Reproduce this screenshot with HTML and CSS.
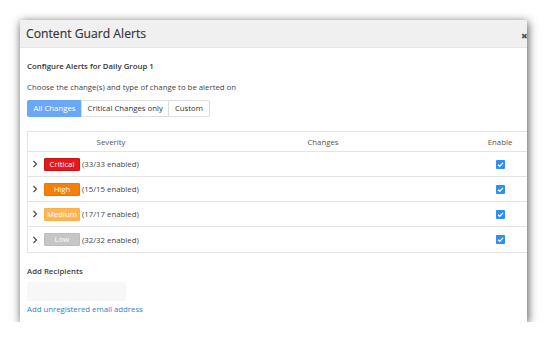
FILE: index.html
```html
<!DOCTYPE html>
<html>
<head>
<meta charset="utf-8">
<link rel="stylesheet" href="styles.css">
</head>
<body>
<div class="stage">
  <div class="dialog">
    <div class="header">
      <span class="title">Content Guard Alerts</span>
      <span class="close">&#x2716;</span>
    </div>
    <div class="content">
      <div class="subtitle">Configure Alerts for Daily Group 1</div>
      <div class="hint">Choose the change(s) and type of change to be alerted on</div>
      <div class="btn-group">
        <span class="btn active">All Changes</span>
        <span class="btn">Critical Changes only</span>
        <span class="btn">Custom</span>
      </div>
      <div class="table">
        <div class="row head">
          <div class="c1">Severity</div>
          <div class="c2">Changes</div>
          <div class="c3">Enable</div>
        </div>
        <div class="row">
          <div class="c1 sev"><svg class="chev" viewBox="0 0 6 8" width="6" height="8"><path d="M1.5 1 L4.5 4 L1.5 7" fill="none" stroke="#444" stroke-width="1.1"/></svg><span class="badge critical">Critical</span><span class="count">(33/33 enabled)</span></div>
          <div class="c2"></div>
          <div class="c3"><span class="check"><svg viewBox="0 0 10 10" width="10" height="10"><path d="M2.3 5.2 L4.2 7 L7.8 3.2" fill="none" stroke="#fff" stroke-width="1.4"/></svg></span></div>
        </div>
        <div class="row">
          <div class="c1 sev"><svg class="chev" viewBox="0 0 6 8" width="6" height="8"><path d="M1.5 1 L4.5 4 L1.5 7" fill="none" stroke="#444" stroke-width="1.1"/></svg><span class="badge high">High</span><span class="count">(15/15 enabled)</span></div>
          <div class="c2"></div>
          <div class="c3"><span class="check"><svg viewBox="0 0 10 10" width="10" height="10"><path d="M2.3 5.2 L4.2 7 L7.8 3.2" fill="none" stroke="#fff" stroke-width="1.4"/></svg></span></div>
        </div>
        <div class="row">
          <div class="c1 sev"><svg class="chev" viewBox="0 0 6 8" width="6" height="8"><path d="M1.5 1 L4.5 4 L1.5 7" fill="none" stroke="#444" stroke-width="1.1"/></svg><span class="badge medium">Medium</span><span class="count">(17/17 enabled)</span></div>
          <div class="c2"></div>
          <div class="c3"><span class="check"><svg viewBox="0 0 10 10" width="10" height="10"><path d="M2.3 5.2 L4.2 7 L7.8 3.2" fill="none" stroke="#fff" stroke-width="1.4"/></svg></span></div>
        </div>
        <div class="row">
          <div class="c1 sev"><svg class="chev" viewBox="0 0 6 8" width="6" height="8"><path d="M1.5 1 L4.5 4 L1.5 7" fill="none" stroke="#444" stroke-width="1.1"/></svg><span class="badge low">Low</span><span class="count">(32/32 enabled)</span></div>
          <div class="c2"></div>
          <div class="c3"><span class="check"><svg viewBox="0 0 10 10" width="10" height="10"><path d="M2.3 5.2 L4.2 7 L7.8 3.2" fill="none" stroke="#fff" stroke-width="1.4"/></svg></span></div>
        </div>
      </div>
      <div class="recip-label">Add Recipients</div>
      <div class="recip-input"></div>
      <div class="link">Add unregistered email address</div>
    </div>
  </div>
</div>
</body>
</html>
```
FILE: styles.css
```css
html, body {
  margin: 0;
  padding: 0;
  background: #fff;
  font-family: "Open Sans", "Liberation Sans", sans-serif;
  color: #333;
}
.stage {
  padding: 20px 0 0 20px;
}
.dialog {
  position: relative;
  width: 507px;
  height: 302px;
  background: #fff;
  overflow: hidden;
  box-shadow: 1px 2px 9px rgba(0, 0, 0, 0.7);
}
.header {
  height: 28px;
  background: #f0f0f0;
  border-bottom: 1px solid #e6e6e6;
  display: flex;
  align-items: center;
  padding-left: 6px;
  box-sizing: border-box;
}
.title {
  font-size: 12.2px;
  color: #333;
  -webkit-text-stroke: 0.15px #333;
}
.close {
  position: absolute;
  right: -1px;
  top: 10px;
  font-size: 8px;
  color: #555;
}
.content {
  padding: 12px 0 0 7px;
}
.subtitle {
  font-size: 7.8px;
  font-weight: 600;
  line-height: 12px;
  color: #333;
}
.hint {
  margin-top: 9px;
  font-size: 7.8px;
  line-height: 12px;
  color: #444;
}
.btn-group {
  margin-top: 7px;
  display: inline-flex;
  border: 1px solid #dcdcdc;
  border-radius: 2px;
  height: 17px;
  box-sizing: border-box;
}
.btn {
  font-size: 7.8px;
  line-height: 15px;
  padding: 0 5.5px;
  color: #333;
  border-left: 1px solid #dcdcdc;
}
.btn:first-child {
  border-left: none;
}
.btn.active {
  background: #6aa8f7;
  color: #fff;
  margin: -1px 0 -1px -1px;
  padding: 1px 5.5px 1px 6.5px;
  border-radius: 2px 0 0 2px;
}
.table {
  margin-top: 14px;
  width: 520px;
  border-top: 1px solid #e4e4e4;
  border-left: 1px solid #e4e4e4;
}
.row {
  display: flex;
  height: 25px;
  border-bottom: 1px solid #e4e4e4;
  align-items: center;
  box-sizing: border-box;
  font-size: 7.8px;
}
.row:last-child {
  height: 26px;
}
.row.head {
  height: 20px;
  color: #555;
}
.c1 { width: 166px; flex: none; }
.c2 { width: 258px; flex: none; }
.c3 { width: 96px; flex: none; }
.head .c1, .head .c2, .head .c3 { text-align: center; }
.c3 { display: flex; justify-content: center; }
.head .c3 { display: block; }
.sev {
  display: flex;
  align-items: center;
}
.chev {
  margin-left: 4px;
  margin-right: 6px;
  flex: none;
}
.badge {
  width: 36px;
  height: 13px;
  line-height: 11px;
  text-align: center;
  color: #fff;
  font-size: 7.8px;
  border-radius: 1px;
  margin-right: 2px;
  box-sizing: border-box;
}
.critical { background: #e3191c; border: 1px solid #c91416; }
.high { background: #f68007; border: 1px solid #e87600; }
.medium { background: #ffb555; border: 1px solid #ffad45; }
.low { background: #c6c6c6; border: 1px solid #bdbdbd; }
.count {
  color: #444;
}
.check {
  width: 9px;
  height: 9px;
  background: #2f8ff0;
  border-radius: 1px;
  display: flex;
}
.check svg {
  width: 9px;
  height: 9px;
}
.recip-label {
  margin-top: 12px;
  font-size: 7.8px;
  font-weight: 600;
  line-height: 12px;
  color: #444;
}
.recip-input {
  margin-top: 5px;
  width: 99px;
  height: 19px;
  background: #f7f7f7;
  border-radius: 2px;
}
.link {
  margin-top: 2px;
  font-size: 7.8px;
  line-height: 12px;
  color: #2f80d1;
}
```
